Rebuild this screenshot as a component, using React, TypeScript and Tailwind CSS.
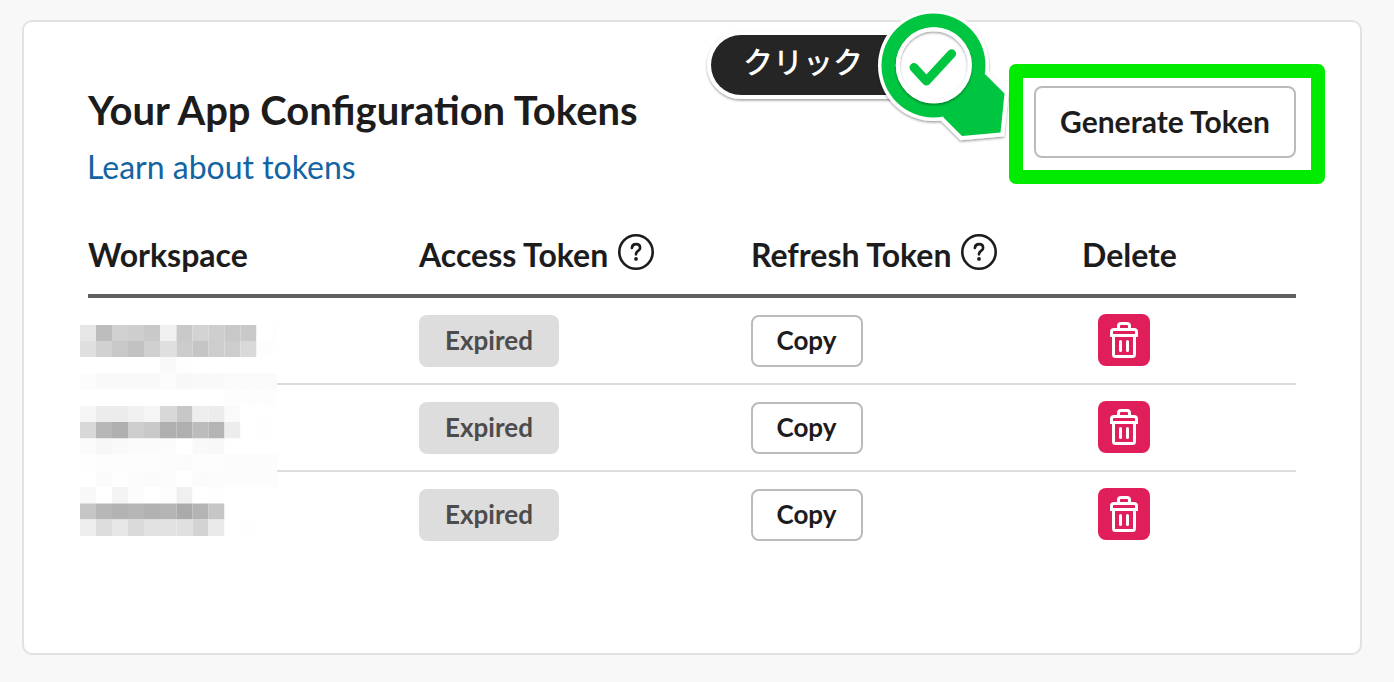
import React from "react";

const columnEdges = [0, 16, 32, 48, 64, 80, 96.5, 112.5, 128.5, 144.5, 160.5, 176.5, 193, 197];
const rowEdges = [0, 16, 32, 48.5, 64.5, 81, 97, 113.5, 129.5, 146, 162, 178.5, 194.5, 211];

const mosaic = [
  "e6 bd d1 ce c9 f0 c9 d3 ce c8 c9 ff fd",
  "df d1 c8 c2 d0 df cc c5 cd cd d9 fd ff",
  "ff ff ff ff ff f9 fe ff ff ff ff ff ff",
  "fc f9 f9 f9 f9 fc f8 f9 f9 fa fa fa fa",
  "ff ff ff ff ff ff ff ff ff fd fd fd fd",
  "f6 ec ec f1 f5 d8 c7 ee ec fa ff ff ff",
  "d8 b7 b0 cd c8 af af bc b4 ed ff fe ff",
  "fb f7 f9 fb fb fb ff f9 f8 ff ff ff ff",
  "fe fd fd fd fd fc fb fd fd fc fc fc fc",
  "ff fb fe fc fb fc ff fb fc fc fc fc fc",
  "f8 ff f4 fc ff fd f0 ff fe ff ff ff ff",
  "c6 b7 b3 b6 b2 b4 aa b4 c6 ff ff ff ff",
  "ee dc e6 da e2 e2 e0 d3 ea ff fe ff ff",
].map((line) => line.split(" "));

function Mosaic() {
  return (
    <svg className="absolute -left-2 top-[27px] h-[211px] w-[197px]" viewBox="0 0 197 211">
      <rect width="197" height="211" fill="#fff" />
      {mosaic.map((row, r) =>
        row.map((tone, c) => (
          <rect
            key={`${r}-${c}`}
            x={columnEdges[c]}
            y={rowEdges[r]}
            width={columnEdges[c + 1] - columnEdges[c]}
            height={rowEdges[r + 1] - rowEdges[r]}
            fill={`#${tone}${tone}${tone}`}
          />
        )),
      )}
    </svg>
  );
}

function HelpIcon() {
  return (
    <svg className="ml-2.5 size-9 shrink-0 -translate-y-[3px]" viewBox="0 0 36 36" fill="none" stroke="#1d1c1d" strokeLinecap="round" strokeLinejoin="round">
      <circle cx="18" cy="18" r="16.7" strokeWidth="2.6" />
      <path d="M13.9 14c.2-2.5 1.8-3.8 4.1-3.8 2.4 0 4.1 1.5 4.1 3.7 0 3.1-4.1 3-4.1 6.1v.3" strokeWidth="2.7" />
      <circle cx="18" cy="24.9" r="1.9" fill="#1d1c1d" stroke="none" />
    </svg>
  );
}

function TrashIcon() {
  return (
    <svg className="size-[52px]" viewBox="0 0 52 52" fill="none" stroke="#fff" strokeWidth="3">
      <path d="M20.5 15v-3a2.5 2.5 0 0 1 2.5-2.5h6a2.5 2.5 0 0 1 2.5 2.5v3" />
      <path d="M13.5 23v-5a2.5 2.5 0 0 1 2.5-2.5h20a2.5 2.5 0 0 1 2.5 2.5v5M13.5 21.5h25" />
      <path d="M15.5 22v18.5a2 2 0 0 0 2 2h17a2 2 0 0 0 2-2V22" />
      <path d="M22.5 27.5v9M29.5 27.5v9" strokeLinecap="round" />
    </svg>
  );
}

function Callout() {
  return (
    <div className="absolute left-[700px] top-0 h-[150px] w-[320px]">
      <svg className="absolute inset-0 size-full" viewBox="700 0 320 150">
        <defs>
          <filter id="soft" x="-20%" y="-20%" width="140%" height="140%">
            <feDropShadow dx="0" dy="1.5" stdDeviation="1" floodColor="#000" floodOpacity="0.38" />
          </filter>
        </defs>
        <g filter="url(#soft)">
          <path d="M930 31H741a34 34 0 0 0 0 68h189z" fill="#fff" />
        </g>
        <path d="M930 35H741a30 30 0 0 0 0 60h189z" fill="#252525" />
        <g filter="url(#soft)">
          <circle cx="933.5" cy="65.5" r="55.5" fill="#fff" />
          <path d="M985 74l19.5 19.5-4 39-38.5 3.5-19-19z" fill="#fff" stroke="#fff" strokeWidth="8" />
        </g>
        <path d="M985 74l19.5 19.5-4 39-38.5 3.5-19-19z" fill="#00c540" />
        <circle cx="933.5" cy="65.5" r="52" fill="#00c540" />
        <circle cx="933.8" cy="65.3" r="38" fill="#fff" />
        <g filter="url(#soft)">
          <circle cx="933.8" cy="65.3" r="36" fill="none" stroke="#fff" strokeWidth="4" />
        </g>
        <path d="M914 67.5l12.4 13.5 25.2-27.3" fill="none" stroke="#00c540" strokeWidth="9" strokeLinecap="round" strokeLinejoin="round" />
      </svg>
      <span className="absolute left-[43px] top-[38px] whitespace-nowrap font-['Noto_Sans_CJK_JP',sans-serif] text-[30px] font-medium leading-[44px] text-white">
        クリック
      </span>
    </div>
  );
}

function TokenRow({ last = false }: { last?: boolean }) {
  return (
    <div className={`grid h-[87px] grid-cols-[331px_332px_331px_1fr] items-start pt-[17px] text-[26px] font-bold ${last ? "" : "border-b-2 border-[#dddddd]"}`}>
      <div />
      <div>
        <div className="flex h-[52px] w-[140px] items-center justify-center rounded-lg bg-[#dddddd] pb-0.5 text-[#4d4c4d]">Expired</div>
      </div>
      <div>
        <button className="flex h-[52px] w-28 items-center justify-center rounded-lg border-2 border-[#bbbbbb] bg-white pb-0.5 pr-px">Copy</button>
      </div>
      <div className="-mt-px pl-4">
        <button aria-label="Delete" className="block size-[52px] rounded-lg bg-[#e01e5a]">
          <TrashIcon />
        </button>
      </div>
    </div>
  );
}

export default function App() {
  return (
    <div className="relative h-[682px] w-[1394px] overflow-hidden bg-[#f8f8f8] px-[22px] pt-5 font-['Lato',sans-serif] text-[#1d1c1d]">
      <main className="h-[635px] w-[1340px] rounded-[10px] border-2 border-[#e2e2e2] bg-white px-16 pt-16">
        <header className="flex h-[124px] justify-between">
          <div>
            <h1 className="h-[52px] whitespace-nowrap text-[40px] font-bold leading-[48px]">Your App Configuration Tokens</h1>
            <a className="-ml-px block whitespace-nowrap text-[32px] leading-[58px] text-[#1264a3]">Learn about tokens</a>
          </div>
          <button className="relative h-[72px] w-[262px] rounded-lg border-2 border-[#bbbbbb] pb-0.5 text-[30px] font-bold">
            <span className="whitespace-nowrap">Generate Token</span>
            <span className="pointer-events-none absolute -left-[27.5px] -top-6 h-[119.5px] w-[316px] rounded-[7px] border-[14px] border-[#00eb00]" />
          </button>
        </header>
        <section>
          <div className="grid h-[88px] grid-cols-[331px_332px_331px_1fr] items-center border-b-4 border-[#616061] pt-1.5 text-[32px] font-bold">
            <div>Workspace</div>
            <div className="flex items-center whitespace-nowrap">Access Token<HelpIcon /></div>
            <div className="flex items-center whitespace-nowrap">Refresh Token<HelpIcon /></div>
            <div>Delete</div>
          </div>
          <div className="relative">
            <TokenRow />
            <TokenRow />
            <TokenRow last />
            <Mosaic />
          </div>
        </section>
      </main>
      <Callout />
    </div>
  );
}
